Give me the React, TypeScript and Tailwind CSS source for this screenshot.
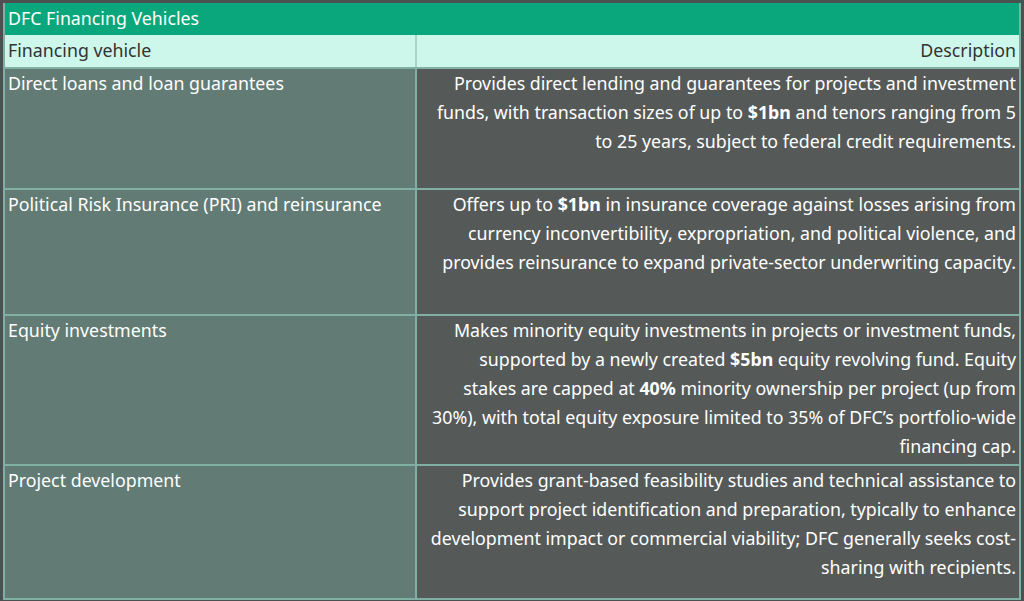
export default function App() {
  const rows: [string, React.ReactNode, string][] = [
    ["Direct loans and loan guarantees", <>Provides direct lending and guarantees for projects and investment funds, with transaction sizes of up to <b>$1bn</b> and tenors ranging from 5 to 25 years, subject to federal credit requirements.</>, "h-[121px]"],
    ["Political Risk Insurance (PRI) and reinsurance", <>Offers up to <b>$1bn</b> in insurance coverage against losses arising from currency inconvertibility, expropriation, and political violence, and provides reinsurance to expand private-sector underwriting capacity.</>, "h-[126px]"],
    ["Equity investments", <>Makes minority equity investments in projects or investment funds, supported by a newly created <b>$5bn</b> equity revolving fund. Equity stakes are capped at <b>40%</b> minority ownership per project (up from 30%), with total equity exposure limited to 35% of DFC’s portfolio-wide financing cap.</>, "h-[150px]"],
    ["Project development", <>Provides grant-based feasibility studies and technical assistance to support project identification and preparation, typically to enhance development impact or commercial viability; DFC generally seeks cost-sharing with recipients.</>, "h-[134px]"],
  ];
  return (
    <div className="w-[1024px] h-[601px] bg-[#4b5150] pt-[3px] pl-[3px] text-[17.8px] text-white" style={{ fontFamily: '"Noto Sans", sans-serif' }}>
      <div className="w-[1018px] border-2 border-[#7fb0a3] border-t-0">
        <div className="h-[32px] bg-[#0aa77c] px-[3px] pt-[1px] leading-[28px]">DFC Financing Vehicles</div>
        <div className="flex h-[32px] bg-[#cdf7ea] text-[#333] leading-[28px]">
          <div className="w-[412px] px-[3px] pt-[1px] border-r-2 border-[#a9d4c8]">Financing vehicle</div>
          <div className="flex-1 px-[3px] pt-[1px] text-right">Description</div>
        </div>
        {rows.map(([a, b, h], i) => (
          <div key={i} className={`flex ${h} border-t-2 border-[#7fb0a3]`}>
            <div className="w-[412px] bg-[#627b74] px-[3px] leading-[29px] border-r-2 border-[#7fb0a3]">{a}</div>
            <div className="flex-1 bg-[#555a59] pl-[12px] pr-[3px] leading-[29px] text-right">{b}</div>
          </div>
        ))}
      </div>
    </div>
  );
}
